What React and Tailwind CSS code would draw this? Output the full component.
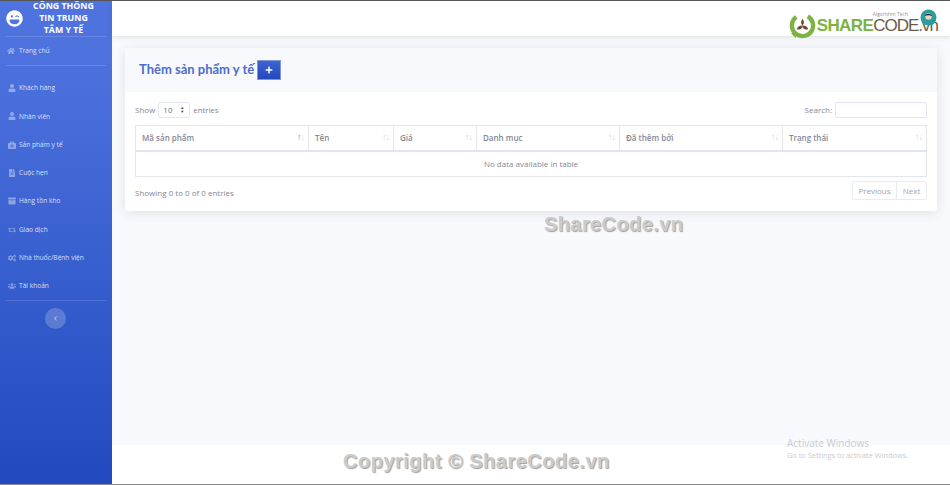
import React from 'react';
import {
  FaHome, FaUser, FaBriefcaseMedical, FaFileAlt, FaArchive, FaRetweet, FaCogs, FaUsers,
  FaLaughWink, FaChevronLeft, FaPlus,
} from 'react-icons/fa';

const NAV = [
  { label: 'Khách hàng', icon: FaUser },
  { label: 'Nhân viên', icon: FaUser },
  { label: 'Sản phẩm y tế', icon: FaBriefcaseMedical },
  { label: 'Cuộc hẹn', icon: FaFileAlt },
  { label: 'Hàng tồn kho', icon: FaArchive },
  { label: 'Giao dịch', icon: FaRetweet },
  { label: 'Nhà thuốc/Bệnh viện', icon: FaCogs },
  { label: 'Tài khoản', icon: FaUsers },
];

const COLS = [
  { label: 'Mã sản phẩm', width: 'w-[173px]', active: true },
  { label: 'Tên', width: 'w-[85px]' },
  { label: 'Giá', width: 'w-[83px]' },
  { label: 'Danh mục', width: 'w-[143px]' },
  { label: 'Đã thêm bởi', width: 'w-[163px]' },
  { label: 'Trạng thái', width: 'flex-1' },
];

function SortArrows({ active }) {
  return (
    <span className="-mt-[4px] flex items-center text-[9px] leading-none tracking-[-1px] text-[#d5d7df]">
      <span className={active ? 'text-[#8a8c98]' : ''}>↑</span>
      <span>↓</span>
    </span>
  );
}

function Sidebar() {
  return (
    <aside className="flex w-[112px] shrink-0 flex-col bg-gradient-to-b from-[#4e73df] from-10% to-[#224abe] text-[#ffffffb0]">
      <div className="flex h-[35px] items-center pl-[6px] pr-[8px]">
        <FaLaughWink className="size-[17px] shrink-0 text-white" />
        <div className="-mt-[1px] flex-1 text-center text-[8.8px] leading-[12px] font-bold text-white">
          <div>CÔNG THÔNG</div>
          <div>TIN TRUNG</div>
          <div>TÂM Y TẾ</div>
        </div>
      </div>
      <div className="mx-[6px] border-t border-[#ffffff26]" />
      <div className="flex h-[28px] items-center gap-[4px] pl-[7px] text-[6.6px]">
        <FaHome className="size-[8px] text-[#ffffff66]" />
        <span className="text-[#ffffffcc]">Trang chủ</span>
      </div>
      <div className="mx-[6px] border-t border-[#ffffff26]" />
      <div className="mt-[8px] flex flex-col">
        {NAV.map(({ label, icon: Icon }) => (
          <div key={label} className="flex h-[28.3px] items-center gap-[3px] pl-[7px] text-[6.6px]">
            <span className="flex w-[9px] shrink-0 justify-center">
              <Icon className="size-[8px] text-[#ffffff66]" />
            </span>
            <span className="text-[#ffffffcc]">{label}</span>
          </div>
        ))}
      </div>
      <div className="mx-[6px] border-t border-[#ffffff26]" />
      <button className="mx-auto mt-[7px] flex size-[21px] -translate-x-px items-center justify-center rounded-full bg-[#ffffff33]">
        <FaChevronLeft className="size-[5px] text-[#ffffff99]" />
      </button>
    </aside>
  );
}

function Logo() {
  return (
    <div className="relative mt-[14px] flex items-center pr-[12px]">
      <svg width="27" height="27" viewBox="0 0 28 28" className="mr-[1px]">
        <circle cx="14" cy="14" r="11" fill="none" stroke="#7cb342" strokeWidth="4.5" strokeDasharray="56 13" transform="rotate(-60 14 14)" />
        <path d="M14 7c2 3 2 5 0 7-2-2-2-4 0-7zM8 18c1-3 3-4 6-4 0 3-2 5-6 4zM20 18c-1-3-3-4-6-4 0 3 2 5 6 4z" fill="#6d4c33" />
        <path d="M2 22l6-1-1 6z" fill="#7cb342" />
      </svg>
      <span className="text-[17px] leading-none font-bold tracking-[-0.6px] text-[#7cb342] [font-family:'Liberation_Sans',sans-serif]">SHARE</span>
      <span className="text-[17px] leading-none tracking-[-1px] text-[#6d5a45] [font-family:'Liberation_Sans',sans-serif]">CODE.vn</span>
      <span className="absolute top-0 right-[42px] text-[5px] leading-none text-[#9a8f88]">Algorithm Tech</span>
      <svg width="17" height="17" viewBox="0 0 17 17" className="absolute -top-[3px] right-[13px]">
        <circle cx="8.5" cy="8.5" r="8" fill="#2a9d9f" />
        <circle cx="8.5" cy="7.5" r="3.2" fill="#f1d6bd" />
        <path d="M5 7c0-3 7-3 7 0-2-1-5-1-7 0z" fill="#23343a" />
      </svg>
    </div>
  );
}

function Card() {
  return (
    <section className="rounded-[3px] bg-white shadow-[0_2px_12px_rgba(58,59,69,0.12)]">
      <header className="flex h-[44px] items-center rounded-t-[3px] bg-[#f8f9fc] pl-[14px]">
        <h1 className="font-['Lato',sans-serif] text-[13px] font-bold text-[#4e6dc9]">Thêm sản phẩm y tế</h1>
        <button className="ml-[3px] flex h-[20px] w-[24px] items-center justify-center border border-[#7d95dc] bg-gradient-to-b from-[#3f63cf] to-[#224abe]">
          <FaPlus className="size-[8px] text-white" />
        </button>
      </header>
      <div className="px-[10px] pt-[10px] pb-[11px] text-[8px] text-[#858796]">
        <div className="flex h-[16px] items-center justify-between">
          <div className="flex items-center gap-[2px]">
            <span>Show</span>
            <div className="mx-[1px] flex h-[16px] w-[32px] items-center justify-between rounded-[3px] border border-[#e3e6f0] pr-[5px] pl-[4px] text-[#6e707e]">
              <span>10</span>
              <span className="flex flex-col text-[4px] leading-[4px] text-[#3a3b45]">
                <span>▲</span>
                <span>▼</span>
              </span>
            </div>
            <span className="tracking-[-0.1px]">entries</span>
          </div>
          <div className="flex items-center gap-[3px]">
            <span>Search:</span>
            <div className="h-[16px] w-[92px] rounded-[2px] border border-[#e3e6f0]" />
          </div>
        </div>
        <div className="mt-[7px] border border-[#e3e6f0]">
          <div className="flex h-[26px] border-b-2 border-[#e3e6f0]">
            {COLS.map((c, i) => (
              <div key={c.label} className={`flex items-center justify-between pr-[4px] pl-[6px] font-semibold ${c.width} ${i < COLS.length - 1 ? 'border-r border-[#e3e6f0]' : ''}`}>
                <span className="text-[8px] text-[#858796]">{c.label}</span>
                <SortArrows active={c.active} />
              </div>
            ))}
          </div>
          <div className="flex h-[24px] items-center justify-center text-[#858796]">No data available in table</div>
        </div>
        <div className="mt-[4px] flex h-[19px] items-center justify-between">
          <span className="pt-[4px]">Showing 0 to 0 of 0 entries</span>
          <div className="flex h-[19px] rounded-[3px] border border-[#e9ebf2] text-[#a3a4b0]">
            <span className="flex w-[44px] items-center justify-center border-r border-[#e9ebf2]">Previous</span>
            <span className="flex w-[29px] items-center justify-center">Next</span>
          </div>
        </div>
      </div>
    </section>
  );
}

export default function App() {
  const mark = "font-bold text-[#cbcbcb] [font-family:'Liberation_Sans',sans-serif] [text-shadow:1px_1px_1px_#a0a0a0]";
  return (
    <div className="relative flex h-[485px] w-[950px] overflow-hidden border-t border-b border-t-[#555] border-b-[#8a8a8a] bg-[#f8f9fc] font-['Open_Sans',sans-serif]">
      <Sidebar />
      <div className="flex min-w-0 flex-1 flex-col">
        <div className="flex h-[35px] shrink-0 items-center justify-end bg-white shadow-[0_1px_5px_rgba(58,59,69,0.14)]">
          <Logo />
        </div>
        <main className="flex-1 px-[13px] pt-[12px]">
          <Card />
        </main>
        <footer className="h-[39px] shrink-0 bg-white" />
      </div>

      {/* watermarks sit over the page */}
      <span className={`absolute top-[212px] left-[544px] text-[20px] leading-[22px] tracking-[0.4px] ${mark}`}>ShareCode.vn</span>
      <span className={`absolute top-[449px] left-[343px] text-[20px] leading-[22px] tracking-[0.5px] ${mark}`}>Copyright © ShareCode.vn</span>
      <div className="absolute top-[436px] left-[787px] text-[#c9cbd1]">
        <div className="text-[10px] leading-[13px]">Activate Windows</div>
        <div className="text-[7.4px] leading-[11px]">Go to Settings to activate Windows.</div>
      </div>
    </div>
  );
}
